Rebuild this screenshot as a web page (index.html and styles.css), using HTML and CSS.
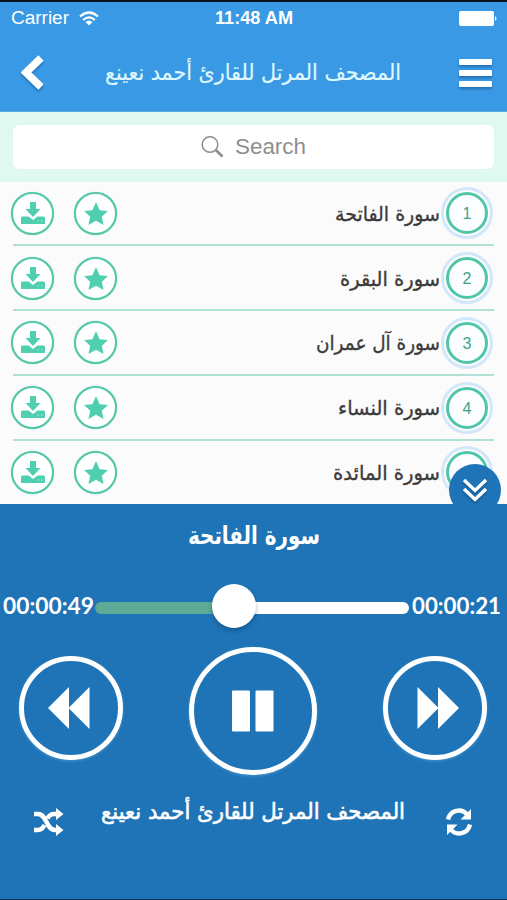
FILE: index.html
```html
<!DOCTYPE html>
<html lang="ar">
<head>
<meta charset="utf-8">
<meta name="viewport" content="width=device-width">
<title>المصحف المرتل</title>
<link rel="stylesheet" href="styles.css">
</head>
<body>
<svg class="defs" width="0" height="0" aria-hidden="true">
  <symbol id="download" viewBox="0 0 24 23"><path d="M9 0h6v7h4.500L12 15 4.500 7H9z"/><path d="M1.500 14.500h6L12 18l4.500-3.500h6q1.500 0 1.500 1.500v6H0v-6q0-1.500 1.500-1.500z"/><path class="dot" d="M16.500 18.500h1.500v1h-1.500zM20 18.500h1.500v1H20z"/></symbol>
  <symbol id="star" viewBox="0 0 24 23"><path d="M12 0l3.600 8.200 8.400.8-6.200 5.800 1.800 8.200-7.600-4.300L4.400 23l1.800-8.200L0 9l8.400-.8z"/></symbol>
</svg>
<header class="top">
  <div class="status">
    <div class="carrier">
      <svg class="label" width="59" height="20"><text x="0" y="16" textLength="58" lengthAdjust="spacingAndGlyphs">Carrier</text></svg>
      <svg width="20" height="15" viewBox="0 0 20 15"><g fill="none" stroke="#fff" stroke-width="2.200"><path d="M1 5.500Q10-2.500 19 5.500M4.200 9Q10 3.800 15.800 9"/></g><path d="M6.500 11Q10 8 13.500 11L10 14.500z" fill="#fff"/></svg>
    </div>
    <svg class="label clock" width="79" height="20"><text x="0" y="16" textLength="78" lengthAdjust="spacingAndGlyphs">11:48 AM</text></svg>
    <svg class="battery" width="39" height="15" viewBox="0 0 39 15" fill="#fff"><rect width="35" height="15" rx="2"/><path d="M36 5q3 2.500 0 5z"/></svg>
  </div>
  <div class="nav">
    <svg class="shadow" width="24" height="36" viewBox="0 0 24 36"><path d="M20 3L5 17.500 20 32" fill="none" stroke="#fff" stroke-width="7.500"/></svg>
    <svg class="heading" width="298" height="40"><text x="297" y="25" textLength="296" lengthAdjust="spacingAndGlyphs">المصحف المرتل للقارئ أحمد نعينع</text></svg>
    <svg class="shadow" width="34" height="30" viewBox="0 0 34 30" fill="#fff"><rect y="1" width="33" height="6" rx="1"/><rect y="12" width="33" height="6" rx="1"/><rect y="23" width="33" height="6" rx="1"/></svg>
  </div>
</header>
<div class="search">
  <div class="field">
    <svg width="23" height="22" viewBox="0 0 23 22" fill="none" stroke="#8b8e8e"><circle cx="9" cy="8.500" r="7.800" stroke-width="1.500"/><path d="M14.800 14L21.500 20.500" stroke-width="2.500"/></svg>
    <svg class="hint" width="72" height="28"><text x="0" y="21" textLength="71" lengthAdjust="spacingAndGlyphs">Search</text></svg>
  </div>
</div>
<main class="list">
  <div class="row">
    <span class="ring"><svg width="24" height="23"><use href="#download"/></svg></span><span class="ring"><svg width="24" height="23"><use href="#star"/></svg></span>
    <svg class="name" width="120" height="40"><text x="120" y="27" textLength="105" lengthAdjust="spacingAndGlyphs">سورة الفاتحة</text></svg><span class="number"><b>1</b></span>
  </div>
  <div class="row">
    <span class="ring"><svg width="24" height="23"><use href="#download"/></svg></span><span class="ring"><svg width="24" height="23"><use href="#star"/></svg></span>
    <svg class="name" width="120" height="40"><text x="120" y="27" textLength="100" lengthAdjust="spacingAndGlyphs">سورة البقرة</text></svg><span class="number"><b>2</b></span>
  </div>
  <div class="row">
    <span class="ring"><svg width="24" height="23"><use href="#download"/></svg></span><span class="ring"><svg width="24" height="23"><use href="#star"/></svg></span>
    <svg class="name" width="130" height="40"><text x="130" y="27" textLength="124" lengthAdjust="spacingAndGlyphs">سورة آل عمران</text></svg><span class="number"><b>3</b></span>
  </div>
  <div class="row">
    <span class="ring"><svg width="24" height="23"><use href="#download"/></svg></span><span class="ring"><svg width="24" height="23"><use href="#star"/></svg></span>
    <svg class="name" width="120" height="40"><text x="120" y="27" textLength="102" lengthAdjust="spacingAndGlyphs">سورة النساء</text></svg><span class="number"><b>4</b></span>
  </div>
  <div class="row">
    <span class="ring"><svg width="24" height="23"><use href="#download"/></svg></span><span class="ring"><svg width="24" height="23"><use href="#star"/></svg></span>
    <svg class="name" width="120" height="40"><text x="120" y="27" textLength="107" lengthAdjust="spacingAndGlyphs">سورة المائدة</text></svg><span class="number"><b></b></span>
  </div>
</main>
<section class="player">
  <div class="collapse"><svg class="shadow" width="26" height="24" viewBox="0 0 26 24" fill="none" stroke="#fff" stroke-width="3.400"><path d="M2 2l11 10.500L24 2M2 11l11 10.500L24 11"/></svg></div>
  <svg class="title" width="136" height="40"><text x="134" y="26" textLength="132" lengthAdjust="spacingAndGlyphs">سورة الفاتحة</text></svg>
  <div class="progress">
    <svg class="time" width="92" height="26"><text x="0" y="21" textLength="91" lengthAdjust="spacingAndGlyphs">00:00:49</text></svg>
    <div class="track"><div class="thumb"></div></div>
    <svg class="time" width="90" height="26"><text x="0" y="21" textLength="89" lengthAdjust="spacingAndGlyphs">00:00:21</text></svg>
  </div>
  <div class="controls">
    <div class="button"><svg width="42" height="42" viewBox="0 0 42 42" fill="#fff"><path d="M0 21L21 0v42zM20.500 21L41.500 0v42z"/></svg></div>
    <div class="button pause"><svg width="42" height="42" viewBox="0 0 42 42" fill="#fff"><rect y=".5" width="18" height="41" rx="1"/><rect x="23.500" y=".5" width="18" height="41" rx="1"/></svg></div>
    <div class="button"><svg width="42" height="42" viewBox="0 0 42 42" fill="#fff"><path d="M.5 0l21 21-21 21zM21 0l21 21-21 21z"/></svg></div>
  </div>
  <div class="footer">
    <svg class="modes" width="30" height="28" viewBox="0 0 30 28"><g fill="none" stroke="#fff" stroke-width="4.500"><path d="M0 6h4C13 6 12 22 21 22h3M0 22h4c3 0 5-2 6.500-5M13.500 10.500C15 7.500 17 6 20 6h4"/></g><path fill="#fff" d="M22 0l7.500 6L22 12zM22 16l7.500 6-7.500 6z"/></svg>
    <svg class="subtitle" width="306" height="40"><text x="305" y="25" textLength="304" lengthAdjust="spacingAndGlyphs">المصحف المرتل للقارئ أحمد نعينع</text></svg>
    <svg class="modes" width="26" height="28" viewBox="0 0 26 28"><g fill="none" stroke="#fff" stroke-width="4.400"><path d="M2 11.500C4 2 15.500-.5 21 6.500M24 16.500C22 26 10.500 28.500 5 21.500"/></g><path fill="#fff" d="M25 1v10.500H14.500zM1 27V16.500h10.500z"/></svg>
  </div>
</section>
</body>
</html>
```
FILE: styles.css
```css
* { box-sizing: border-box; }
body { margin: 0; width: 507px; height: 900px; overflow: hidden; background: #fbfbfb; font-family: "Liberation Sans", sans-serif; }
svg { display: block; flex: none; }
svg text { fill: #fff; }
.defs { position: absolute; }
.heading, .name, .title, .subtitle { font-family: "DejaVu Sans", sans-serif; direction: rtl; overflow: visible; }
.top { height: 112px; background: #3999e4; border-top: 2px solid #07111f; border-bottom: 1px solid #54a9e6; }
.status { height: 34px; display: grid; grid-template-columns: 1fr 79px 1fr; align-items: center; padding: 0 9px 2px 11px; }
.carrier { display: flex; align-items: center; gap: 9px; }
.label { font-size: 18px; overflow: visible; }
.clock { font-weight: bold; }
.battery { justify-self: end; }
.nav { height: 72px; display: flex; align-items: center; padding: 2px 14px 0 21px; }
.nav .heading { margin: 4px 57px 0 59px; font-size: 22px; }
.nav .heading text { fill: #dff8ff; stroke: #dff8ff; stroke-width: .2px; }
.shadow { filter: drop-shadow(0 2px 1px rgba(0, 40, 90, .35)); }
.search { height: 69.500px; padding: 13px; background: #dff9f0; }
.field { height: 44px; border-radius: 7px; background: #fff; display: flex; align-items: center; justify-content: center; gap: 11px; }
.hint { font-size: 22.500px; }
.hint text { fill: #8e8e8e; }
.list { height: 322.500px; overflow: hidden; }
.row { height: 64.750px; margin: 0 13px; border-bottom: 2px solid #b0e2d3; display: flex; align-items: center; }
.row:last-child { border-color: transparent; }
.ring { width: 43px; height: 43px; margin: 1px 22px 0 -2px; border: 2.500px solid #57c7aa; border-radius: 50%; display: flex; align-items: center; justify-content: center; background: #fff; flex: none; box-shadow: 0 0 1px #57c7aa; }
.ring svg { fill: #4fceb0; }
.ring + .ring { margin-left: -2px; }
.dot { fill: #b5eee0; }
.name { margin: 2px 0 0 auto; font-size: 20px; }
.name text { fill: #3b3b3d; stroke: #3b3b3d; stroke-width: .35px; }
.number { width: 52px; height: 52px; margin: 1px 1px 0; flex: none; border: 3px solid #d3e7fb; border-radius: 50%; display: flex; justify-content: center; align-items: center; background: #fbfdff; }
.number b { width: 42px; height: 42px; border: 3px solid #50c6a6; border-radius: 50%; text-align: center; font-size: 16px; font-weight: 400; line-height: 37px; color: #40a389; }
.player { position: relative; height: 396px; background: #1e74b6; border-bottom: 1px solid #0b3556; display: flex; flex-direction: column; align-items: center; padding-top: 14px; }
.collapse { position: absolute; top: -40px; right: 6px; width: 52px; height: 52px; border-radius: 50%; background: #1e74b6; display: flex; justify-content: center; align-items: center; }
.title { font-size: 25px; font-weight: bold; }
.progress { width: 507px; height: 44px; margin-top: 26px; padding: 0 5px 0 3px; display: flex; align-items: center; }
.time { font-family: Lato, sans-serif; font-size: 22px; font-weight: 700; overflow: visible; }
.track { position: relative; width: 314px; height: 12px; margin: 4px 3px 0 0; border-radius: 6px; background: linear-gradient(90deg, #5dab94 140px, #fff 140px); }
.thumb { position: absolute; left: 117px; top: -18px; width: 44px; height: 44px; border-radius: 50%; background: #fff; box-shadow: 0 3px 4px rgba(0, 35, 70, .3); }
.controls { width: 468px; margin: 19px 0 0 -1px; display: flex; justify-content: space-between; align-items: center; }
.button { width: 104px; height: 104px; margin-bottom: 7px; border: 5px solid #fff; border-radius: 50%; display: flex; justify-content: center; align-items: center; box-shadow: 0 1px 3px rgba(150, 210, 255, .35); }
.pause { width: 128px; height: 128px; margin-bottom: 0; }
.button:first-child svg { margin-right: 5px; }
.button:last-child svg { margin-left: 5px; }
.footer { width: 438px; margin: 17px 0 0 -1px; display: flex; justify-content: space-between; align-items: center; }
.subtitle { font-size: 22px; margin-left: -4px; }
.subtitle text { stroke: #fff; stroke-width: .6px; }
.modes { margin-top: 16px; }
```
